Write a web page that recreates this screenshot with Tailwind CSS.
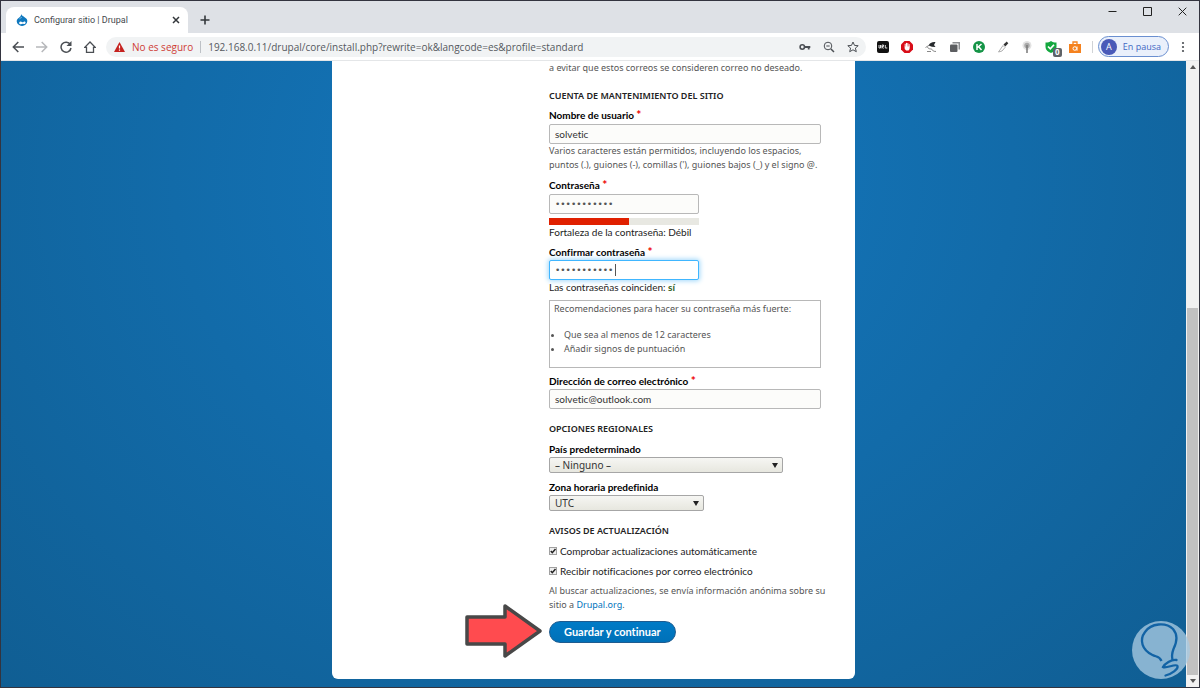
<!DOCTYPE html>
<html lang="es">
<head>
<meta charset="utf-8">
<meta name="viewport" content="width=device-width, initial-scale=1">
<title>Configurar sitio | Drupal</title>
<script src="https://cdn.jsdelivr.net/npm/@tailwindcss/browser@4"></script>
</head>
<body class="relative flex min-h-screen flex-col overflow-x-hidden border border-[#33343f] bg-white font-['Open_Sans',sans-serif]">

<header class="flex flex-col leading-4">
  <!-- Tab strip -->
  <div class="flex h-8 items-end bg-[#dee1e6] pl-[5px]">
    <div class="flex h-[26px] w-[182px] items-center rounded-t-lg bg-white pr-1.5 pl-2.5">
      <svg class="size-3 shrink-0" viewBox="0 0 14 14" aria-hidden="true">
        <path d="M6 0c.6 1.700 2.200 2.500 3.600 3.500 2.300 1.400 3.600 2.700 3.600 4.600A6 6 0 0 1 7 13.900a6 6 0 0 1-6.200-5.500c0-2.200 1.600-3.400 3-4.300C5.300 3 6 1.500 6 0z" fill="#0f78be"/>
        <path d="M3.600 10.200c.8-1.600 2.200-1.800 3.400-.8 1.200.9 1.800-.9 3.400-.6 1.200.3 1 2 .1 2.700-1.200.8-1.700-.7-2.700 0-1.500 1-4.300.7-4.200-1.300z" fill="#fff"/>
        <path d="M4 5.600c1.200-.8 2.100-1 2.800-2.200" stroke="#8cc6ec" fill="none"/>
      </svg>
      <span class="ml-1.5 grow font-[Roboto,sans-serif] text-[9px] text-[#45494d]">Configurar sitio | Drupal</span>
      <button type="button" aria-label="Cerrar pestaña" class="flex size-3 items-center justify-center">
        <svg class="size-2" viewBox="0 0 8 8"><path d="M1 1l6 6M7 1L1 7" stroke="#33373b" stroke-width="1.500"/></svg>
      </button>
    </div>
    <button type="button" aria-label="Nueva pestaña" class="ml-3 flex h-[26px] items-center">
      <svg class="size-2.5" viewBox="0 0 10 10"><path d="M5 0.500v9M.5 5h9" stroke="#33373b" stroke-width="1.600"/></svg>
    </button>
    <div class="ml-auto flex h-full items-start gap-[26px] pt-1.5 pr-3">
      <button type="button" aria-label="Minimizar"><svg class="size-[9px]" viewBox="0 0 9 9"><path d="M.5 4.500h8" stroke="#222"/></svg></button>
      <button type="button" aria-label="Maximizar"><svg class="size-[9px]" viewBox="0 0 9 9"><path d="M.5.5h8v8h-8z" stroke="#222" fill="none"/></svg></button>
      <button type="button" aria-label="Cerrar"><svg class="size-[9px]" viewBox="0 0 9 9"><path d="M.7.7l7.600 7.600M8.300.7L.7 8.300" stroke="#222"/></svg></button>
    </div>
  </div>

  <!-- Toolbar -->
  <div class="flex h-7 items-center border-b border-[#e4e6e8] pr-3.5 pl-[11px]">
    <div class="flex items-center gap-3">
      <button type="button" aria-label="Atrás"><svg class="size-3" viewBox="0 0 12 12" fill="none" stroke="#4b4f54" stroke-width="1.500"><path d="M12 6H1.500M6.300 1L1.300 6l5 5"/></svg></button>
      <button type="button" aria-label="Adelante"><svg class="size-3" viewBox="0 0 12 12" fill="none" stroke="#b6b8bb" stroke-width="1.500"><path d="M0 6h10.500M5.700 1l5 5-5 5"/></svg></button>
      <button type="button" aria-label="Recargar"><svg class="size-3" viewBox="0 0 12 12"><path d="M10.300 3.500A5 5 0 1 0 11 7" fill="none" stroke="#4b4f54" stroke-width="1.500"/><path d="M11.500 0v5h-5z" fill="#4b4f54"/></svg></button>
      <button type="button" aria-label="Inicio"><svg class="size-3" viewBox="0 0 12 12"><path d="M6 1L.8 6.300h1.700v5h7v-5h1.700z" fill="none" stroke="#4b4f54" stroke-width="1.300"/></svg></button>
    </div>
    <div class="ml-2.5 flex h-5 grow items-center rounded-full bg-[#f1f3f4] pr-[7px] pl-2 text-[10px]">
      <svg class="h-2.5 w-[11px] shrink-0" viewBox="0 0 11 10" aria-hidden="true"><path d="M5.500 0L11 10H0z" fill="#c5221f"/><path d="M5.500 3.500v3M5.500 7.500v1.200" stroke="#fff" stroke-width="1.200"/></svg>
      <span class="ml-[7px] whitespace-nowrap text-[#cf3c35]">No es seguro</span>
      <span class="mx-[7px] h-3 w-px bg-[#bdc1c6]"></span>
      <div class="grow">
        <input type="text" aria-label="Dirección" value="192.168.0.11/drupal/core/install.php?rewrite=ok&amp;langcode=es&amp;profile=standard" class="block h-4 w-full bg-transparent text-[#55595e] outline-none">
      </div>
      <div class="flex items-center gap-3">
        <svg class="h-3 w-3" viewBox="0 0 12 12" aria-hidden="true"><circle cx="3.300" cy="6" r="2.200" fill="none" stroke="#4b4f54" stroke-width="1.600"/><path d="M5.500 6h5.800M9.700 6v2.500" stroke="#4b4f54" stroke-width="1.800" fill="none"/></svg>
        <svg class="h-3 w-3" viewBox="0 0 12 12" fill="none" stroke="#4b4f54" aria-hidden="true"><circle cx="5" cy="5" r="3.800"/><path d="M8 8l3 3" stroke-width="1.500"/><path d="M3.300 5h3.400"/></svg>
        <svg class="h-3 w-3" viewBox="0 0 12 12" aria-hidden="true"><path d="M6 1l1.500 3.400 3.700.3-2.800 2.400.9 3.600L6 8.800l-3.300 1.900.9-3.600L.8 4.700l3.700-.3z" fill="none" stroke="#4b4f54"/></svg>
      </div>
    </div>
    <div class="ml-[11px] flex items-center gap-3">
      <svg class="size-3" viewBox="0 0 12 12" aria-hidden="true"><rect width="12" height="12" rx="2" fill="#111"/><path d="M2 4v3h1.500V4M5 7.500V4h1.500v1.500H5l1.500 2M8.300 4v3h2" stroke="#ddd" fill="none"/></svg>
      <svg class="size-3" viewBox="0 0 12 12" aria-hidden="true"><path d="M3.500 0h5L12 3.500v5L8.500 12h-5L0 8.500v-5z" fill="#d80d18"/><path d="M4.200 6V3.200M5.500 6V2.300M6.800 6V2.500M8.100 6V3.500" stroke="#fff" stroke-width="1" stroke-linecap="round"/><path d="M3.700 5.500h4.900V8L7.500 9.600H5.200L3.700 8z" fill="#fff"/></svg>
      <svg class="size-3" viewBox="0 0 12 12" aria-hidden="true"><path d="M3.500 4.500C4.500 2 7.500.5 10.500 1L9 4l1.500 2-3.500-.3z" fill="#26292c"/><path d="M.5 6.500l4-2.500M2.500 6c1 3 4 1 5 3s2 1 3.500 1.500M2 10.500h4" stroke="#888" fill="none"/></svg>
      <svg class="size-3" viewBox="0 0 12 12" aria-hidden="true"><path d="M3.500 1H11v7.500H9.500v-6h-6z" fill="#8b8d90"/><rect x="1" y="3.500" width="7.500" height="7.500" rx="1" fill="#5c5e61"/></svg>
      <svg class="size-3" viewBox="0 0 12 12" aria-hidden="true"><circle cx="6" cy="6" r="6" fill="#159447"/><path d="M4 3v6M8.500 3L4.500 6.500M5.500 5.500l3 3.500" stroke="#fff" stroke-width="1.500"/></svg>
      <svg class="size-3" viewBox="0 0 12 12" aria-hidden="true"><path d="M6 4.500l2 2L5 10 1.500 11z" fill="#fff" stroke="#999" stroke-width=".8"/><path d="M6.500 3.500L9.700.6l1.600 1.600-3 3.300z" fill="#333"/></svg>
      <svg class="size-3" viewBox="0 0 12 12" aria-hidden="true"><circle cx="6" cy="4.500" r="4.500" fill="#e2e2e2"/><circle cx="6" cy="4.500" r="2.700" fill="#aaa"/><path d="M6 4v8" stroke="#777" stroke-width="1.500"/></svg>
      <div class="relative">
        <svg class="block size-3" viewBox="0 0 12 12" aria-hidden="true"><path d="M.5 1.500C3 1.500 4.500 1 6 0c1.500 1 3 1.500 5.500 1.500V6c0 3-2.500 5-5.500 6C3 11 .5 9 .5 6z" fill="#14a83f"/><path d="M3 5.500l2.300 2.300L9 3.700" stroke="#fff" stroke-width="1.700" fill="none"/></svg>
        <span class="absolute top-[7px] left-2 flex size-[9px] items-center justify-center rounded-xs bg-[#5f6368] text-[8px] leading-none font-bold text-white">0</span>
      </div>
      <svg class="size-3" viewBox="0 0 12 12" aria-hidden="true"><path d="M0 3h12v9H0z" fill="#f5821e"/><path d="M4 3V1h4v2" stroke="#f5821e" stroke-width="1.300" fill="none"/><circle cx="5.800" cy="7.500" r="1.800" stroke="#fff" fill="none"/><path d="M8 5.500v4.200" stroke="#fff"/></svg>
    </div>
    <span class="ml-[11px] h-3 w-px bg-[#d0d3d6]"></span>
    <button type="button" class="ml-[5px] flex h-[21px] items-center rounded-full border border-[#6a8fd0] bg-[#eaf0fb] pr-[7px] pl-0.5 text-[9px] whitespace-nowrap text-[#3f68c4]">
      <span class="mr-1.5 flex size-4 items-center justify-center rounded-full bg-[#4a5ab8] text-white">A</span>En pausa
    </button>
    <button type="button" aria-label="Menú" class="ml-3"><svg class="h-3 w-1" viewBox="0 0 4 12" fill="#4b4f54"><circle cx="2" cy="2" r="1.100"/><circle cx="2" cy="6" r="1.100"/><circle cx="2" cy="10" r="1.100"/></svg></button>
  </div>
</header>

<div class="flex grow">
  <main class="grow bg-[radial-gradient(840px_727px_at_50%_114px,#1478bf,#105e93)]">
    <div class="relative mx-auto w-[523px] rounded-b-md bg-white pr-[34px] pb-9 pl-[217px] font-[Lato,sans-serif] text-[10px] leading-[14px] text-[#222] [font-variant-ligatures:none]">
      <p class="font-['Noto_Sans',sans-serif] text-[9px] whitespace-nowrap text-[#555]">a evitar que estos correos se consideren correo no deseado.</p>

      <form>
        <h2 class="mt-3.5 font-['Noto_Sans',sans-serif] text-[9px] font-semibold whitespace-nowrap uppercase">Cuenta de mantenimiento del sitio</h2>
        <label for="user" class="mt-[5px] block font-bold text-black">Nombre de usuario <span class="text-xs leading-none text-[#e00]">*</span></label>
        <input id="user" type="text" value="solvetic" class="mt-0.5 block h-5 w-full rounded-xs border border-[#b8b8b8] bg-[#fcfcfa] px-[5px] text-[#333]">
        <p class="font-['Noto_Sans',sans-serif] text-[9px] whitespace-nowrap text-[#555]">Varios caracteres están permitidos, incluyendo los espacios,<br>puntos (.), guiones (-), comillas ('), guiones bajos (_) y el signo @.</p>

        <label for="pass" class="mt-1.5 block font-bold text-black">Contraseña <span class="text-xs leading-none text-[#e00]">*</span></label>
        <input id="pass" type="password" value="abcdefghijk" class="mt-0.5 block h-5 w-[150px] rounded-xs border border-[#b8b8b8] bg-[#fcfcfa] px-[5px] font-['DejaVu_Sans',sans-serif] text-[9px] text-[#555]">
        <div class="mt-1 h-[7px] w-[150px] bg-[#e8e8e2]"><div class="h-full bg-[#e02000]" style="width:53%"></div></div>
        <p>Fortaleza de la contraseña: Débil</p>

        <label for="pass2" class="mt-1.5 block font-bold text-black">Confirmar contraseña <span class="text-xs leading-none text-[#e00]">*</span></label>
        <div class="relative mt-px w-[150px]">
          <input id="pass2" type="password" value="abcdefghijk" class="block h-5 w-full rounded-xs border border-[#40b6ff] bg-white px-[5px] font-['DejaVu_Sans',sans-serif] text-[9px] text-[#555] shadow-[0_0_5px_1px_#a0d8fb] outline-none">
          <span class="absolute top-1 left-[66px] h-3 w-px bg-[#555]"></span>
        </div>
        <p>Las contraseñas coinciden: <b class="text-[#325e1c]">sí</b></p>

        <div class="mt-1.5 h-[68px] border border-[#b8b8b8] px-1 pt-px font-['Noto_Sans',sans-serif] text-[9px] text-[#555]">
          <p>Recomendaciones para hacer su contraseña más fuerte:</p>
          <ul class="mt-3 list-disc pl-2.5">
            <li>Que sea al menos de 12 caracteres</li>
            <li>Añadir signos de puntuación</li>
          </ul>
        </div>

        <label for="mail" class="mt-1.5 block font-bold text-black">Dirección de correo electrónico <span class="text-xs leading-none text-[#e00]">*</span></label>
        <input id="mail" type="email" value="solvetic@outlook.com" class="mt-px block h-5 w-full rounded-xs border border-[#b8b8b8] bg-[#fcfcfa] px-[5px] text-[#333]">

        <h2 class="mt-[13px] font-['Noto_Sans',sans-serif] text-[9px] font-semibold uppercase">Opciones regionales</h2>
        <label for="country" class="mt-1.5 block font-bold text-black">País predeterminado</label>
        <div class="relative mt-px w-[234px]">
          <select id="country" class="block h-4 w-full appearance-none rounded-xs border border-[#a6a6a6] bg-linear-to-b from-[#f6f6f3] to-[#e7e7df] px-[5px] font-['Noto_Sans',sans-serif] leading-[14px] text-[#333]"><option>– Ninguno –</option></select>
          <svg class="pointer-events-none absolute top-1.5 right-1 h-[5px] w-2" viewBox="0 0 8 5" aria-hidden="true"><path d="M1 0h6L4 5z" fill="#222"/></svg>
        </div>
        <label for="zone" class="mt-[7px] block font-bold text-black">Zona horaria predefinida</label>
        <div class="relative mt-px w-[155px]">
          <select id="zone" class="block h-4 w-full appearance-none rounded-xs border border-[#a6a6a6] bg-linear-to-b from-[#f6f6f3] to-[#e7e7df] px-[5px] font-['Noto_Sans',sans-serif] leading-[14px] text-[#333]"><option>UTC</option></select>
          <svg class="pointer-events-none absolute top-1.5 right-1 h-[5px] w-2" viewBox="0 0 8 5" aria-hidden="true"><path d="M1 0h6L4 5z" fill="#222"/></svg>
        </div>

        <h2 class="mt-[13px] font-['Noto_Sans',sans-serif] text-[9px] font-semibold uppercase">Avisos de actualización</h2>
        <div class="mt-1.5 flex items-center gap-[3px]">
          <span class="relative size-2"><input id="auto" type="checkbox" checked class="block size-2 appearance-none border border-[#a0a0a0] bg-[#eee]"><svg class="pointer-events-none absolute inset-0 size-2" viewBox="0 0 8 8" aria-hidden="true"><path d="M1.800 4l1.500 1.700L6.500 2" stroke="#222" stroke-width="1.500" fill="none"/></svg></span>
          <label for="auto">Comprobar actualizaciones automáticamente</label>
        </div>
        <div class="mt-1.5 flex items-center gap-[3px]">
          <span class="relative size-2"><input id="notify" type="checkbox" checked class="block size-2 appearance-none border border-[#a0a0a0] bg-[#eee]"><svg class="pointer-events-none absolute inset-0 size-2" viewBox="0 0 8 8" aria-hidden="true"><path d="M1.800 4l1.500 1.700L6.500 2" stroke="#222" stroke-width="1.500" fill="none"/></svg></span>
          <label for="notify">Recibir notificaciones por correo electrónico</label>
        </div>
        <p class="mt-1.5 font-['Noto_Sans',sans-serif] text-[9px] whitespace-nowrap text-[#555]">Al buscar actualizaciones, se envía información anónima sobre su<br>sitio a <a href="https://www.drupal.org" class="text-[#0074bd]">Drupal.org</a>.</p>

        <div class="relative mt-[9px] flex">
          <svg class="absolute -top-[18px] -left-[85px] h-14 w-[79px]" viewBox="0 0 79 56" aria-hidden="true"><path d="M3 14h38V3l35 25-35 25V41H3z" fill="#ff4b4f" stroke="#484848" stroke-width="3.500" stroke-linejoin="round"/></svg>
          <button type="submit" class="h-[22px] rounded-full border border-[#1e5c90] bg-linear-to-b from-[#007bc6] to-[#0071b8] px-3.5 text-[11px] font-bold whitespace-nowrap text-white">Guardar y continuar</button>
        </div>
      </form>
    </div>
  </main>

  <!-- Scroll bar -->
  <div class="flex w-[13px] shrink-0 flex-col items-center bg-[#f1f1f1]" aria-hidden="true">
    <svg class="my-1 h-1 w-1.5" viewBox="0 0 6 4"><path d="M0 4l3-4 3 4z" fill="#555"/></svg>
    <div class="grow-[235]"></div>
    <div class="w-[11px] grow-[366] bg-[#c1c1c1]"></div>
    <svg class="my-1 h-1 w-1.5" viewBox="0 0 6 4"><path d="M0 0l3 4 3-4z" fill="#555"/></svg>
  </div>
</div>

<svg class="absolute right-[9px] bottom-2 size-[58px]" viewBox="0 0 58 58" aria-hidden="true">
  <circle cx="29" cy="29" r="29" fill="#a9cbe2" fill-opacity=".78"/>
  <path d="M29.500 40c-2-5-5-4-9-6C10 29 7 19 13 11 19 2 34 1 41 8c6 7 3 15 .5 20-1.500 4-2 7-1 11" fill="none" stroke="#1263a5" stroke-width="2.300"/>
  <path d="M44.500 39c-5-1-12 4-13.500 7 3 2 13-4 14.500-1 1 3-6 8-12 9.500" fill="none" stroke="#1263a5" stroke-width="2.300" stroke-linecap="round"/>
</svg>
</body>
</html>
